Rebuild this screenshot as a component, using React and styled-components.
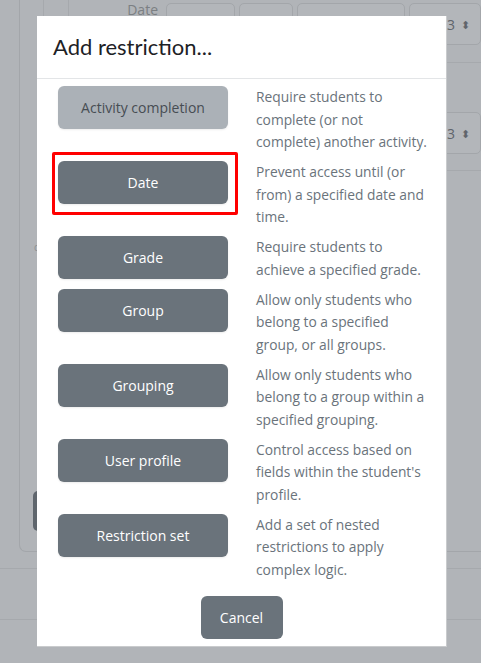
import React from 'react';
import styled, { createGlobalStyle } from 'styled-components';

const GlobalStyle = createGlobalStyle`
  html, body {
    margin: 0;
    padding: 0;
  }
  body {
    font-family: "Open Sans", "Liberation Sans", sans-serif;
    background: #b1b4b8;
  }
`;

const restrictions = [
  {
    label: 'Activity completion',
    lines: ['Require students to', 'complete (or not', 'complete) another activity.'],
    muted: true,
  },
  {
    label: 'Date',
    lines: ['Prevent access until (or', 'from) a specified date and', 'time.'],
    highlighted: true,
  },
  {
    label: 'Grade',
    lines: ['Require students to', 'achieve a specified grade.'],
  },
  {
    label: 'Group',
    lines: ['Allow only students who', 'belong to a specified', 'group, or all groups.'],
  },
  {
    label: 'Grouping',
    lines: ['Allow only students who', 'belong to a group within a', 'specified grouping.'],
  },
  {
    label: 'User profile',
    lines: ['Control access based on', "fields within the student's", 'profile.'],
  },
  {
    label: 'Restriction set',
    lines: ['Add a set of nested', 'restrictions to apply', 'complex logic.'],
  },
];

const DateSelects = ({ label }) => (
  <DateRow>
    <DateLabel>{label}</DateLabel>
    <FakeSelect $width={69} />
    <FakeSelect $width={54} />
    <FakeSelect $width={108} />
    <FakeSelect $width={72}>
      3 <Arrows>⬍</Arrows>
    </FakeSelect>
  </DateRow>
);

const App = () => (
  <Page>
    <GlobalStyle />

    <Shell>
      <TopSection>
        <Nested>
          <Nested $inner>
            <DateSelects label="Date" />
            <RowLine $top={16} />
            <DateSelects label="" />
            <RowLine $top={15} />
          </Nested>
        </Nested>
      </TopSection>
      <StrayChar>c</StrayChar>
      <HiddenButton />
    </Shell>
    <PageLine $top={16} />
    <PageLine $top={50} />

    <Modal>
      <Header>
        <Title>Add restriction...</Title>
      </Header>
      <Body>
        {restrictions.map((item) => (
          <React.Fragment key={item.label}>
            <ButtonCell>
              <ChoiceButton $muted={item.muted}>{item.label}</ChoiceButton>
              {item.highlighted && <Highlight />}
            </ButtonCell>
            <Description>
              {item.lines.map((line, i) => (
                <React.Fragment key={i}>
                  {line}
                  {i < item.lines.length - 1 && <br />}
                </React.Fragment>
              ))}
            </Description>
          </React.Fragment>
        ))}
      </Body>
      <Footer>
        <CancelButton>Cancel</CancelButton>
      </Footer>
    </Modal>
  </Page>
);

const Page = styled.div`
  position: relative;
  width: 481px;
  height: 663px;
  overflow: hidden;
  background: #b1b4b8;
`;

const Shell = styled.div`
  margin-left: 19px;
  height: 551px;
  border-left: 1px solid #a3a6aa;
  border-bottom: 1px solid #a3a6aa;
  border-bottom-left-radius: 7px;
  display: flex;
  flex-direction: column;
`;

const TopSection = styled.div`
  height: 242px;
`;

const Nested = styled.div`
  margin-left: ${({ $inner }) => ($inner ? 24 : 23)}px;
  height: 100%;
  border-left: 1px solid #a6a9ad;
`;

const DateRow = styled.div`
  display: flex;
  align-items: flex-start;
  gap: 4px;
  padding-top: 3px;
  height: 43px;
`;

const DateLabel = styled.div`
  width: 95px;
  text-align: right;
  padding-right: 4px;
  margin-top: -3px;
  font-size: 14px;
  color: #7b7f83;
`;

const FakeSelect = styled.div`
  width: ${({ $width }) => $width}px;
  flex-shrink: 0;
  height: 42px;
  box-sizing: border-box;
  border: 1px solid #a3a6aa;
  border-radius: 5px;
  background: #b3b6ba;
  display: flex;
  align-items: center;
  justify-content: flex-end;
  padding-right: 10px;
  font-size: 14px;
  color: #5f646a;
`;

const Arrows = styled.span`
  font-size: 11px;
  margin-left: 6px;
`;

const RowLine = styled.div`
  margin-top: ${({ $top }) => $top}px;
  border-top: 1px solid #a6a9ad;
  height: ${({ $top }) => ($top === 16 ? 46 : 0)}px;
`;

const StrayChar = styled.div`
  margin: 0 0 0 14px;
  font-size: 10px;
  line-height: 10px;
  color: #8a8e92;
`;

const HiddenButton = styled.div`
  margin: 239px 0 0 13px;
  width: 40px;
  height: 40px;
  border-radius: 5px;
  background: #5f666d;
`;

const PageLine = styled.div`
  margin-top: ${({ $top }) => $top}px;
  border-top: 1px solid #a6a9ad;
`;

const Modal = styled.div`
  position: absolute;
  top: 16px;
  left: 37px;
  width: 410px;
  box-sizing: border-box;
  background: #fff;
  border-right: 1px solid #c9cbcd;
  border-bottom: 1px solid #c9cbcd;
`;

const Header = styled.div`
  padding: 17px 16px;
  border-bottom: 1px solid #e3e5e7;
`;

const Title = styled.h5`
  margin: 0;
  font-family: "Lato", "Open Sans", sans-serif;
  font-weight: 400;
  font-size: 22px;
  line-height: 28px;
  color: #1d2125;
`;

const Body = styled.div`
  display: grid;
  grid-template-columns: 170px 176px;
  column-gap: 28px;
  row-gap: 7.5px;
  padding: 7px 0 0 21px;
`;

const ButtonCell = styled.div`
  position: relative;
  align-self: start;
`;

const ChoiceButton = styled.button`
  width: 170px;
  height: 43px;
  border: none;
  border-radius: 6px;
  background: ${({ $muted }) => ($muted ? '#abb1b7' : '#6a737b')};
  color: ${({ $muted }) => ($muted ? '#474d53' : '#fff')};
  font-family: "Open Sans", "Liberation Sans", sans-serif;
  font-size: 14px;
  box-shadow: 0 1px 2px rgba(0, 0, 0, 0.08);
`;

const Highlight = styled.div`
  position: absolute;
  top: -9px;
  left: -6px;
  right: -10px;
  bottom: -11px;
  border: 3px solid #ff0000;
  border-radius: 2px;
`;

const Description = styled.div`
  font-size: 13.8px;
  line-height: 22.5px;
  color: #6a737b;
  white-space: nowrap;
`;

const Footer = styled.div`
  display: flex;
  justify-content: center;
  padding: 15px 0 7px;
`;

const CancelButton = styled.button`
  width: 82px;
  height: 43px;
  border: none;
  border-radius: 6px;
  background: #6a737b;
  color: #fff;
  font-family: "Open Sans", "Liberation Sans", sans-serif;
  font-size: 14px;
`;

export default App;
